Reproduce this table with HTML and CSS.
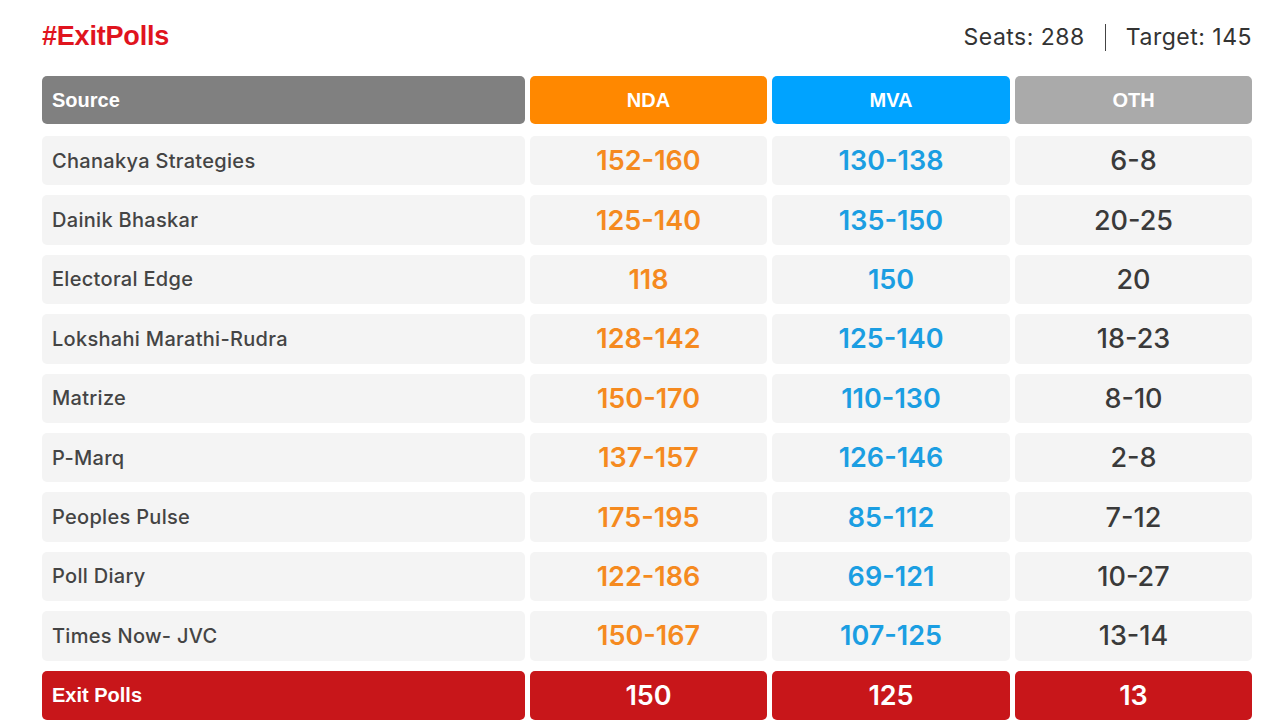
FILE: index.html
```html
<!DOCTYPE html>
<html>
<head>
<meta charset="utf-8">
<link rel="stylesheet" href="styles.css">
</head>
<body>
<div class="wrap">
  <div class="top">
    <div class="title">#ExitPolls</div>
    <div class="meta"><span>Seats: 288</span><span class="sep"></span><span>Target: 145</span></div>
  </div>
  <div class="grid">
    <div class="hd src">Source</div>
    <div class="hd nda">NDA</div>
    <div class="hd mva">MVA</div>
    <div class="hd oth">OTH</div>

    <div class="cell name">Chanakya Strategies</div>
    <div class="cell num o">152-160</div>
    <div class="cell num b">130-138</div>
    <div class="cell num g">6-8</div>

    <div class="cell name">Dainik Bhaskar</div>
    <div class="cell num o">125-140</div>
    <div class="cell num b">135-150</div>
    <div class="cell num g">20-25</div>

    <div class="cell name">Electoral Edge</div>
    <div class="cell num o">118</div>
    <div class="cell num b">150</div>
    <div class="cell num g">20</div>

    <div class="cell name">Lokshahi Marathi-Rudra</div>
    <div class="cell num o">128-142</div>
    <div class="cell num b">125-140</div>
    <div class="cell num g">18-23</div>

    <div class="cell name">Matrize</div>
    <div class="cell num o">150-170</div>
    <div class="cell num b">110-130</div>
    <div class="cell num g">8-10</div>

    <div class="cell name">P-Marq</div>
    <div class="cell num o">137-157</div>
    <div class="cell num b">126-146</div>
    <div class="cell num g">2-8</div>

    <div class="cell name">Peoples Pulse</div>
    <div class="cell num o">175-195</div>
    <div class="cell num b">85-112</div>
    <div class="cell num g">7-12</div>

    <div class="cell name">Poll Diary</div>
    <div class="cell num o">122-186</div>
    <div class="cell num b">69-121</div>
    <div class="cell num g">10-27</div>

    <div class="cell name">Times Now- JVC</div>
    <div class="cell num o">150-167</div>
    <div class="cell num b">107-125</div>
    <div class="cell num g">13-14</div>

    <div class="cell tot name">Exit Polls</div>
    <div class="cell tot num">150</div>
    <div class="cell tot num">125</div>
    <div class="cell tot num">13</div>
  </div>
</div>
</body>
</html>
```
FILE: styles.css
```css
html, body {
  margin: 0;
  padding: 0;
  background: #fff;
}
.wrap {
  padding: 0 23px 0 42px;
  width: 1210px;
}
.top {
  display: flex;
  justify-content: space-between;
  align-items: center;
  height: 76px;
  box-sizing: border-box;
}
.title {
  font-family: "Liberation Sans", Arial, sans-serif;
  font-weight: bold;
  font-size: 27px;
  color: #e0141e;
  letter-spacing: -0.2px;
  margin-top: -4px;
}
.meta {
  display: flex;
  align-items: center;
  font-family: Inter, "Noto Sans", sans-serif;
  font-size: 23px;
  letter-spacing: 0.5px;
  color: #333;
  margin-top: -2px;
}
.sep {
  display: inline-block;
  width: 1px;
  height: 27px;
  background: #444;
  margin: 0 20px;
}
.grid {
  display: grid;
  grid-template-columns: 483px 237px 238px 237px;
  grid-template-rows: 50px repeat(10, 49.4px);
  column-gap: 5px;
  row-gap: 10px;
}
.hd {
  border-radius: 5px;
  color: #fff;
  font-family: "Liberation Sans", Arial, sans-serif;
  font-weight: bold;
  font-size: 20px;
  display: flex;
  align-items: center;
  justify-content: center;
  margin-bottom: 2px;
}
.hd.src {
  background: #808080;
  justify-content: flex-start;
  padding-left: 10px;
}
.hd.nda { background: #ff8800; }
.hd.mva { background: #00a3ff; }
.hd.oth { background: #aaaaaa; }
.cell {
  background: #f4f4f4;
  border-radius: 5px;
  display: flex;
  align-items: center;
}
.name {
  padding-left: 10px;
  font-family: Inter, "Noto Sans", sans-serif;
  font-weight: 500;
  font-size: 20px;
  letter-spacing: 0.3px;
  color: #444;
}
.num {
  justify-content: center;
  font-family: Inter, "Noto Sans", sans-serif;
  font-weight: 600;
  font-size: 27px;
}
.o { color: #f58a1f; }
.b { color: #1b9ee2; }
.g { color: #3a3a3a; font-weight: 500; }
.tot {
  background: #c8161a;
  color: #fff;
}
.tot.name {
  font-family: "Liberation Sans", Arial, sans-serif;
  font-weight: bold;
  font-size: 20px;
  letter-spacing: 0;
  color: #fff;
}
```
